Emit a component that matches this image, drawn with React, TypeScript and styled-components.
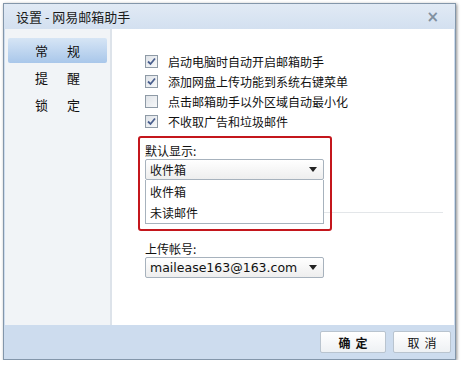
import React from "react";
import styled, { createGlobalStyle } from "styled-components";

const Global = createGlobalStyle`
  html, body { margin: 0; padding: 0; background: #ffffff; }
  body { font-family: "Noto Sans CJK SC", "DejaVu Sans", sans-serif; }
`;

const CJK = `"Noto Sans CJK SC", "DejaVu Sans", sans-serif`;

const Page = styled.div`
  padding: 3px 0 0 3px;
`;

const Window = styled.div`
  width: 453px;
  height: 357px;
  border: 1px solid #8396aa;
  box-shadow: 1px 1px 3px rgba(0, 0, 0, 0.45);
  display: flex;
  flex-direction: column;
  box-sizing: border-box;
  background: #cddcee;
`;

const TitleBar = styled.div`
  height: 25px;
  flex: none;
  display: flex;
  align-items: center;
  justify-content: space-between;
  padding: 0 16px 0 12px;
  background: linear-gradient(#e1eaf5, #d3e0f0);
  font-family: ${CJK};
  font-size: 13px;
  color: #1a1a1a;
`;

const Close = styled.span`
  font-family: "DejaVu Sans", sans-serif;
  font-size: 15px;
  font-weight: bold;
  color: #8090a0;
`;

const Main = styled.div`
  flex: 1;
  display: flex;
  margin: 0 1px;
  min-height: 0;
`;

const Sidebar = styled.div`
  width: 107px;
  flex: none;
  background: #f1f4f7;
  border-right: 2px solid #dde3ea;
  padding: 9px 3px 0 3px;
  box-sizing: border-box;
  display: flex;
  flex-direction: column;
  gap: 2px;
`;

const NavItem = styled.div<{ $active?: boolean }>`
  height: 25px;
  display: flex;
  align-items: center;
  justify-content: center;
  gap: 19px;
  font-family: ${CJK};
  font-size: 13px;
  color: #111;
  border-radius: 2px;
  background: ${(p) =>
    p.$active ? "linear-gradient(#d6e5f5, #a9c7ea)" : "transparent"};
`;

const Content = styled.div`
  flex: 1;
  background: #ffffff;
  padding: 22px 0 0 33px;
  box-sizing: border-box;
  font-family: ${CJK};
  font-size: 12px;
  color: #111;
`;

const CheckRow = styled.label`
  height: 20px;
  display: flex;
  align-items: center;
  gap: 10px;
`;

const Box = styled.span`
  width: 11px;
  height: 11px;
  border: 1px solid #8e9aa6;
  background: linear-gradient(135deg, #dfe3e8, #f7f8f9);
  display: inline-flex;
  align-items: center;
  justify-content: center;
  flex: none;
`;

const Section = styled.div<{ $top: number }>`
  position: relative;
  margin-top: ${(p) => p.$top}px;
  width: 179px;
`;

const Label = styled.div`
  height: 16px;
  line-height: 16px;
`;

const Select = styled.div<{ $latin?: boolean }>`
  height: 21px;
  border: 1px solid #a7b2bd;
  border-radius: 2px;
  background: linear-gradient(#ffffff, #eeeeee);
  box-sizing: border-box;
  display: flex;
  align-items: center;
  justify-content: space-between;
  padding: 0 6px 0 4px;
  font-family: ${(p) => (p.$latin ? `"DejaVu Sans", sans-serif` : CJK)};
  font-size: ${(p) => (p.$latin ? "12.5px" : "12px")};
  color: #111;
`;

const Arrow = styled.span`
  width: 0;
  height: 0;
  border-left: 4px solid transparent;
  border-right: 4px solid transparent;
  border-top: 5px solid #222;
`;

const List = styled.div`
  position: absolute;
  left: 0;
  top: 37px;
  width: 179px;
  height: 44px;
  border: 1px solid #a7b2bd;
  border-top: none;
  background: #fff;
  box-sizing: border-box;
  z-index: 2;
  padding-top: 1px;
`;

const Option = styled.div`
  height: 21px;
  line-height: 21px;
  padding-left: 4px;
  font-size: 12px;
`;

const Highlight = styled.div`
  position: absolute;
  left: -7px;
  top: -7px;
  width: 194px;
  height: 95px;
  border: 2px solid #c4161c;
  border-radius: 3px;
  box-sizing: border-box;
  z-index: 3;
  pointer-events: none;
`;

const Rule = styled.div`
  margin-top: 32px;
  margin-right: 11px;
  border-top: 1px solid #e3e6e9;
`;

const Footer = styled.div`
  height: 34px;
  flex: none;
  display: flex;
  align-items: center;
  justify-content: flex-end;
  gap: 7px;
  padding-right: 4px;
  background: #cddcee;
`;

const Button = styled.button<{ $w: number; $primary?: boolean }>`
  width: ${(p) => p.$w}px;
  height: 22px;
  border: 1px solid #b9c4cf;
  border-radius: 2px;
  background: linear-gradient(#ffffff, #eef1f4);
  font-family: ${CJK};
  font-size: 12px;
  font-weight: ${(p) => (p.$primary ? "bold" : "normal")};
  letter-spacing: 5px;
  padding: 0 0 0 5px;
  color: #111;
`;

const Check = () => (
  <svg width="9" height="9" viewBox="0 0 9 9">
    <path d="M1 4.5 L3.5 7 L8 1.5" fill="none" stroke="#4a5f8e" strokeWidth="1.8" />
  </svg>
);

const options = [
  { text: "启动电脑时自动开启邮箱助手", checked: true },
  { text: "添加网盘上传功能到系统右键菜单", checked: true },
  { text: "点击邮箱助手以外区域自动最小化", checked: false },
  { text: "不收取广告和垃圾邮件", checked: true },
];

export default function App() {
  return (
    <>
      <Global />
      <Page>
        <Window>
          <TitleBar>
            <span>设置 - 网易邮箱助手</span>
            <Close>×</Close>
          </TitleBar>
          <Main>
            <Sidebar>
              <NavItem $active>
                <span>常</span>
                <span>规</span>
              </NavItem>
              <NavItem>
                <span>提</span>
                <span>醒</span>
              </NavItem>
              <NavItem>
                <span>锁</span>
                <span>定</span>
              </NavItem>
            </Sidebar>
            <Content>
              {options.map((o) => (
                <CheckRow key={o.text}>
                  <Box>{o.checked && <Check />}</Box>
                  <span>{o.text}</span>
                </CheckRow>
              ))}
              <Section $top={12}>
                <Highlight />
                <Label>默认显示:</Label>
                <Select>
                  <span>收件箱</span>
                  <Arrow />
                </Select>
                <List>
                  <Option>收件箱</Option>
                  <Option>未读邮件</Option>
                </List>
              </Section>
              <Rule />
              <Section $top={28}>
                <Label>上传帐号:</Label>
                <Select $latin>
                  <span>mailease163@163.com</span>
                  <Arrow />
                </Select>
              </Section>
            </Content>
          </Main>
          <Footer>
            <Button $w={66} $primary>确定</Button>
            <Button $w={58}>取消</Button>
          </Footer>
        </Window>
      </Page>
    </>
  );
}
